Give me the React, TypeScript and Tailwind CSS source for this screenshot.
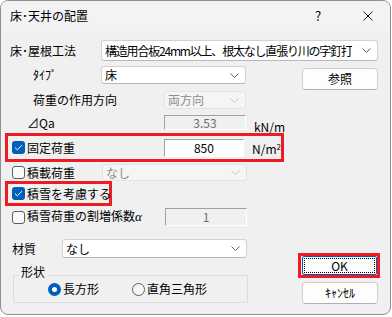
import React from "react";

const font = { fontFamily: '"Noto Sans CJK JP", "Liberation Sans", sans-serif' };

function Chevron({ disabled }: { disabled?: boolean }) {
  return (
    <svg width="9" height="5" viewBox="0 0 9 5" className="shrink-0">
      <path d="M0.5 0.5 L4.5 4.5 L8.5 0.5" fill="none" stroke={disabled ? "#c4c4c4" : "#606060"} strokeWidth="1" />
    </svg>
  );
}

function Combo({ text, width, height, disabled, tight }: { text: string; width: string; height: string; disabled?: boolean; tight?: boolean }) {
  return (
    <div
      className={`${width} ${height} flex items-center justify-between pl-[3px] pr-[6px] rounded-[3px] border ${
        disabled ? "bg-[#f5f5f5] border-[#e3e3e3] text-[#8c8c8c]" : "bg-white border-[#d2d2d2] border-b-[#b8b8b8] text-black"
      }`}
    >
      <span className={`whitespace-nowrap overflow-hidden ${tight ? "tracking-[-1.2px]" : ""}`}>{text}</span>
      <Chevron disabled={disabled} />
    </div>
  );
}

function Sunken({ text, disabled, height }: { text: string; disabled?: boolean; height: string }) {
  return (
    <div
      className={`w-[82px] ${height} flex items-center justify-center border-t border-l border-t-[#a0a0a0] border-l-[#a0a0a0] border-r border-b border-r-white border-b-white ${
        disabled ? "bg-[#f0f0f0] text-[#6d6d6d]" : "bg-white text-black"
      }`}
    >
      <span className="leading-none">{text}</span>
    </div>
  );
}

function Check({ checked }: { checked?: boolean }) {
  if (checked)
    return (
      <div className="w-[13px] h-[13px] rounded-[3px] bg-[#005fb8] flex items-center justify-center shrink-0">
        <svg width="9" height="7" viewBox="0 0 9 7">
          <path d="M1 3.6 L3.3 5.8 L8 1.2" fill="none" stroke="white" strokeWidth="1" />
        </svg>
      </div>
    );
  return <div className="w-[13px] h-[13px] rounded-[3px] border border-[#5d5d5d] bg-[#fbfbfb] shrink-0" />;
}

function Radio({ checked }: { checked?: boolean }) {
  if (checked)
    return (
      <div className="w-[13px] h-[13px] rounded-full bg-[#005fb8] flex items-center justify-center shrink-0">
        <div className="w-[5px] h-[5px] rounded-full bg-white" />
      </div>
    );
  return <div className="w-[13px] h-[13px] rounded-full border border-[#5d5d5d] bg-[#f8f8f8] shrink-0" />;
}

function Btn({ children }: { children: React.ReactNode }) {
  return (
    <div className="w-[76px] h-[22px] rounded-[4px] bg-[#fdfdfd] border border-[#d0d0d0] border-b-[#b0b0b0] flex items-center justify-center">
      {children}
    </div>
  );
}

export default function App() {
  return (
    <div className="w-[392px] h-[317px] bg-white text-[12px] text-black" style={font}>
      <div className="w-[391px] h-[315px] border border-[#8f8f8f] rounded-[8px] bg-[#f0f0f0] overflow-hidden flex flex-col">
        {/* title bar */}
        <div className="h-[30px] flex items-center bg-[#f3f3f3] shrink-0">
          <span className="pl-[9px]">床･天井の配置</span>
          <span className="ml-auto w-[14px] text-center text-[13px] mr-[38px]">?</span>
          <svg width="10" height="10" viewBox="0 0 10 10" className="mr-[17px]">
            <path d="M0.5 0.5 L9.5 9.5 M9.5 0.5 L0.5 9.5" stroke="#1a1a1a" strokeWidth="1" />
          </svg>
        </div>

        {/* body */}
        <div className="flex flex-col">
          <div className="mt-[9px] h-[21px] flex items-center pl-[9px]">
            <span className="w-[91px]">床･屋根工法</span>
            <Combo text="構造用合板24mm以上、根太なし直張り川の字釘打" width="w-[277px]" height="h-[21px]" tight />
          </div>

          <div className="flex">
            {/* left column */}
            <div className="w-[297px] flex flex-col">
              <div className="mt-[5px] h-[18px] flex items-center pl-[32px]">
                <span className="w-[68px]">ﾀｲﾌﾟ</span>
                <Combo text="床" width="w-[145px]" height="h-[18px]" />
              </div>

              <div className="mt-[7px] h-[18px] flex items-center pl-[32px]">
                <span className="w-[131px]">荷重の作用方向</span>
                <Combo text="両方向" width="w-[82px]" height="h-[18px]" disabled />
              </div>

              <div className="mt-[6px] h-[15px] flex items-center pl-[26px]">
                <span className="w-[137px]">⊿Qa</span>
                <Sunken text="3.53" disabled height="h-[15px]" />
                <span className="ml-[8px] mt-[9px]">kN/m</span>
              </div>

              <div className="mt-[3px] ml-[4px] w-[279px] h-[29px] border-[3px] border-[#ed1c24] flex items-center pl-[4px]">
                <Check checked />
                <span className="ml-[2px] w-[140px]">固定荷重</span>
                <Sunken text="850" height="h-[18px]" />
                <span className="ml-[8px] mt-[3px]">
                  N/m<sup className="text-[8px]">2</sup>
                </span>
              </div>

              <div className="mt-[2px] h-[17px] flex items-center pl-[11px]">
                <Check />
                <span className="ml-[2px] w-[75px]">積載荷重</span>
                <Combo text="なし" width="w-[145px]" height="h-[17px]" disabled />
              </div>

              <div className="ml-[4px] w-[107px] h-[25px] border-[3px] border-[#ed1c24] flex items-center pl-[4px]">
                <Check checked />
                <span className="ml-[2px] whitespace-nowrap">積雪を考慮する</span>
              </div>

              <div className="mt-[2px] h-[18px] flex items-center pl-[11px]">
                <Check />
                <span className="ml-[2px] w-[138px] whitespace-nowrap">積雪荷重の割増係数<i className="font-['Liberation_Serif'] text-[13px]">α</i></span>
                <Sunken text="1" disabled height="h-[18px]" />
              </div>

              <div className="mt-[13px] h-[19px] flex items-center pl-[11px]">
                <span className="w-[50px]">材質</span>
                <Combo text="なし" width="w-[185px]" height="h-[19px]" />
              </div>

              <div className="relative mt-[17px] ml-[12px] w-[235px] h-[28px] border border-[#dcdcdc] flex items-center">
                <span className="absolute -top-[12px] left-[5px] px-[2px] bg-[#f0f0f0] leading-[16px]">形状</span>
                <div className="ml-[34px] flex items-center">
                  <Radio checked />
                  <span className="ml-[2px]">長方形</span>
                </div>
                <div className="ml-[33px] flex items-center">
                  <Radio />
                  <span className="ml-[2px]">直角三角形</span>
                </div>
              </div>
            </div>

            {/* right column */}
            <div className="flex flex-col">
              <div className="mt-[7px] ml-[4px]">
                <Btn>参照</Btn>
              </div>
              <div className="mt-[163px] w-[82px] h-[25px] border-[3px] border-[#ed1c24] flex items-center pl-[1px]">
                <div className="w-[75px] h-[19px] rounded-[2px] bg-[#fdfdfd] border border-[#005fb8] p-[1px]">
                  <div className="w-full h-full border border-dotted border-black flex items-center justify-center">
                    OK
                  </div>
                </div>
              </div>
              <div className="mt-[4px] ml-[4px]">
                <Btn>ｷｬﾝｾﾙ</Btn>
              </div>
            </div>
          </div>
        </div>
      </div>
    </div>
  );
}
